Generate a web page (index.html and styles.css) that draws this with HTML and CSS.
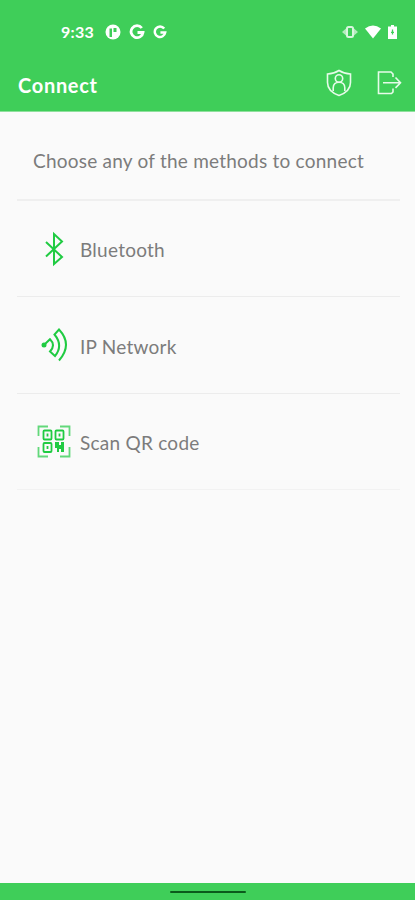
FILE: index.html
```html
<!DOCTYPE html>
<html lang="en">
<head>
    <meta charset="UTF-8">
    <meta name="viewport" content="width=device-width, initial-scale=1.0">
    <title>Connect</title>
    <link rel="stylesheet" href="styles.css">
</head>
<body>
    <header class="header">
        <div class="status-bar">
            <span class="time">9:33</span>
            <svg class="notif" width="16" height="16" viewBox="0 0 16 16">
                <circle cx="8" cy="8" r="7.500" fill="#fff"/>
                <path d="M4.500 13V4.500H7V13M8.500 4H11.500v4H8.500z" fill="#3fce59"/>
            </svg>
            <svg class="notif" width="16" height="16" viewBox="0 0 16 16">
                <path d="M12.800 4A6 6 0 1 0 14 8.500H8.500" fill="none" stroke="#fff" stroke-width="2.800"/>
            </svg>
            <svg class="notif" width="14" height="14" viewBox="0 0 16 16">
                <path d="M12.800 4A6 6 0 1 0 14 8.500H8.500" fill="none" stroke="#fff" stroke-width="2.800"/>
            </svg>
            <div class="system-icons">
                <svg width="16" height="14" viewBox="0 0 16 14">
                    <path d="M0 7L4 3.500v7zM16 7L12 3.500v7z" fill="#b4ebbe"/>
                    <rect x="5" y="2" width="6" height="10" rx="1.500" fill="none" stroke="#d9f5de" stroke-width="2"/>
                </svg>
                <svg width="16" height="14" viewBox="0 0 16 14">
                    <path d="M0 3.500Q8-2.500 16 3.500L8 13.500z" fill="#fff"/>
                </svg>
                <svg width="9" height="14" viewBox="0 0 9 14">
                    <path d="M3 0h3v1.500h3V14H0V1.500h3z" fill="#fff"/>
                    <path d="M4.500 4.500v5M3 7.300h3" stroke="#3fce59" stroke-width="1.300"/>
                </svg>
            </div>
        </div>
        <div class="toolbar">
            <h1 class="title">Connect</h1>
            <svg class="shield-icon" width="26" height="28" viewBox="0 0 26 28" fill="none" stroke="#e6fbe9" stroke-width="1.600">
                <path d="M13 1.500Q8 4.800 1.500 5v8.500C1.500 19.500 6 24 13 26.500c7-2.500 11.500-7 11.500-13V5Q18 4.800 13 1.500z"/>
                <circle cx="13" cy="9.500" r="3.700"/>
                <path d="M7.200 22v-3.200c0-3.500 2.500-5.600 5.800-5.600s5.800 2.100 5.800 5.600V22"/>
            </svg>
            <svg class="exit-icon" width="25" height="24" viewBox="0 0 25 24" fill="none" stroke="#e6fbe9" stroke-width="1.600">
                <path d="M16 6V3l-2-2H1.500v21.500h13L16 21v-3.500M6 11.700h17.500M18.500 6.500l5 5.200-5 5.200"/>
            </svg>
        </div>
    </header>

    <main class="content">
        <p class="prompt">Choose any of the methods to connect</p>
        <ul class="methods">
            <li class="method">
                <svg class="method-icon" width="36" height="36" viewBox="0 0 36 36">
                    <path d="M10 11L26 26 18 33V3L26 10.500 10 25.500"/>
                </svg>
                <span class="label">Bluetooth</span>
            </li>
            <li class="method">
                <svg class="method-icon" width="36" height="36" viewBox="0 0 36 36">
                    <circle class="dot" cx="8" cy="18" r="2.500"/>
                    <path d="M8 18L14 12.200Q20 18 14 24.500L19 29Q27.500 18.500 18.500 7.500L23 2.500Q37 17.500 23 33.500"/>
                </svg>
                <span class="label">IP Network</span>
            </li>
            <li class="method">
                <svg class="method-icon qr" width="36" height="36" viewBox="0 0 36 36">
                    <path class="corner" d="M2.500 12V2.500H12M24 2.500h9.500V12M33.500 23v9.500H24M12 32.500H2.500V23"/>
                    <rect x="7.500" y="6.500" width="8" height="9" rx="1"/>
                    <rect x="19.500" y="6.500" width="8" height="9" rx="1"/>
                    <rect x="7.500" y="19" width="8" height="9" rx="1"/>
                    <path d="M11.500 9.500v3M23.500 9.500v3M11.500 22v3"/>
                    <path class="dot" d="M19 18h4v3h2v-3h3v10h-3v-3h-2v3h-2v-4h-2z"/>
                </svg>
                <span class="label">Scan QR code</span>
            </li>
        </ul>
    </main>

    <footer class="nav-bar">
        <div class="nav-handle"></div>
    </footer>
</body>
</html>
```

FILE: styles.css
```css
* {
    box-sizing: border-box;
}
body {
    display: flex;
    flex-direction: column;
    height: 900px;
    margin: 0;
    font-family: Lato, sans-serif;
    background-color: #fafafa;
}
svg {
    display: block;
    flex-shrink: 0;
}
.header {
    height: 112px;
    background-color: #3fce59;
    color: white;
    border-bottom: 1px solid #8fe09d;
}
.status-bar {
    display: flex;
    align-items: center;
    height: 56px;
    padding: 8px 18px 0 61px;
}
.time {
    width: 44px;
    padding-bottom: 2px;
    font-size: 16px;
    font-weight: bold;
    letter-spacing: 0.3px;
}
.notif {
    margin-right: 8px;
}
.system-icons {
    display: flex;
    gap: 7px;
    margin-left: auto;
}
.toolbar {
    display: flex;
    align-items: center;
    height: 54px;
    padding: 0 13px 0 18px;
}
.title {
    flex: 1;
    margin: 3px 0 0;
    font-size: 20px;
    font-weight: bold;
    letter-spacing: 0.7px;
}
.exit-icon {
    margin-left: 25px;
}
.content {
    flex: 1;
    padding: 0 15px 0 17px;
}
.prompt {
    height: 89px;
    margin: 0;
    padding: 0 16px;
    border-bottom: 2px solid #efefef;
    color: #7c7c7c;
    font-size: 19px;
    line-height: 97px;
    letter-spacing: 0.23px;
    white-space: nowrap;
}
.methods {
    margin: 0;
    padding: 0;
    list-style: none;
}
.method {
    display: flex;
    align-items: center;
    height: 96px;
    padding-left: 19px;
    border-bottom: 1px solid #ececec;
}
.method + .method {
    height: 97px;
}
.method:last-child {
    height: 96px;
    border-bottom-color: #f2f2f2;
}
.method-icon {
    fill: none;
    stroke: #20cb42;
    stroke-width: 2;
}
.qr {
    stroke-width: 1.8;
}
.corner {
    stroke: #62d87a;
}
.dot {
    fill: #20cb42;
    stroke: none;
}
.label {
    margin: 2px 0 0 8px;
    color: #7c7c7c;
    font-size: 19px;
    letter-spacing: 0.25px;
}
.nav-bar {
    height: 17px;
    padding-top: 8px;
    background-color: #3fce59;
}
.nav-handle {
    width: 76px;
    height: 2px;
    margin: 0 auto;
    border-radius: 1px;
    background-color: #0b5a1c;
}
```
